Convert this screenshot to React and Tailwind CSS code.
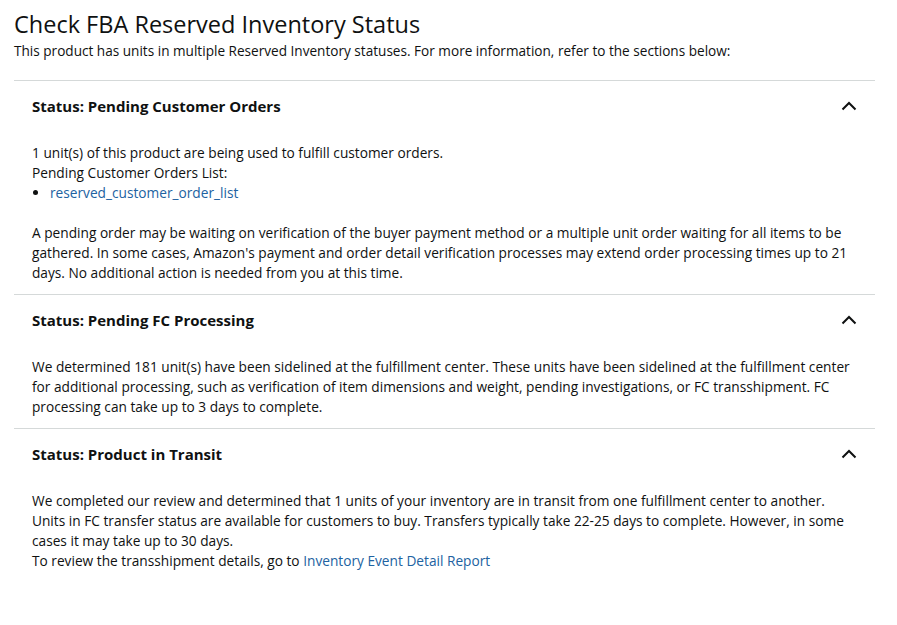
import React from 'react';

const Chevron = () => (
  <svg width="16" height="10" viewBox="0 0 16 10" fill="none" className="shrink-0">
    <path d="M1.5 8.5 L8 2 L14.5 8.5" stroke="#0f1111" strokeWidth="2" />
  </svg>
);

const Section = ({ title, last, children }) => (
  <div className="border-t border-[#d5d9d9] px-[18px]">
    <div className="flex h-[52px] items-center justify-between pb-[2px]">
      <h2 className="text-[15px] font-bold text-[#0f1111]">{title}</h2>
      <Chevron />
    </div>
    <div className={`pt-[10px] text-[13.7px] leading-[20px] text-[#0f1111] ${last ? '' : 'pb-[11px]'}`}>{children}</div>
  </div>
);

export default function App() {
  return (
    <div className="min-h-[625px] bg-white px-[14px] pt-[9px] font-['Open_Sans',sans-serif] text-[#0f1111]">
      <h1 className="text-[23.5px] leading-[31px] text-[#0f1111]">Check FBA Reserved Inventory Status</h1>
      <p className="mt-[1px] text-[13.6px] leading-[20px]">
        This product has units in multiple Reserved Inventory statuses. For more information, refer to the sections below:
      </p>
      <div className="mt-[19px] w-[861px]">
        <Section title="Status: Pending Customer Orders">
          <p>1 unit(s) of this product are being used to fulfill customer orders.</p>
          <p>Pending Customer Orders List:</p>
          <ul className="list-disc pl-[18px]">
            <li>
              <a href="#" className="text-[#2162a1]">reserved_customer_order_list</a>
            </li>
          </ul>
          <p className="mt-[20px]">
            A pending order may be waiting on verification of the buyer payment method or a multiple unit order waiting for all items to be gathered. In some cases, Amazon's payment and order detail verification processes may extend order processing times up to 21 days. No additional action is needed from you at this time.
          </p>
        </Section>
        <Section title="Status: Pending FC Processing">
          <p>
            We determined 181 unit(s) have been sidelined at the fulfillment center. These units have been sidelined at the fulfillment center for additional processing, such as verification of item dimensions and weight, pending investigations, or FC transshipment. FC processing can take up to 3 days to complete.
          </p>
        </Section>
        <Section title="Status: Product in Transit" last>
          <p>
            We completed our review and determined that 1 units of your inventory are in transit from one fulfillment center to another.
            <br />
            Units in FC transfer status are available for customers to buy. Transfers typically take 22-25 days to complete. However, in some cases it may take up to 30 days.
          </p>
          <p>
            To review the transshipment details, go to{' '}
            <a href="#" className="text-[#2162a1]">Inventory Event Detail Report</a>
          </p>
        </Section>
      </div>
    </div>
  );
}
